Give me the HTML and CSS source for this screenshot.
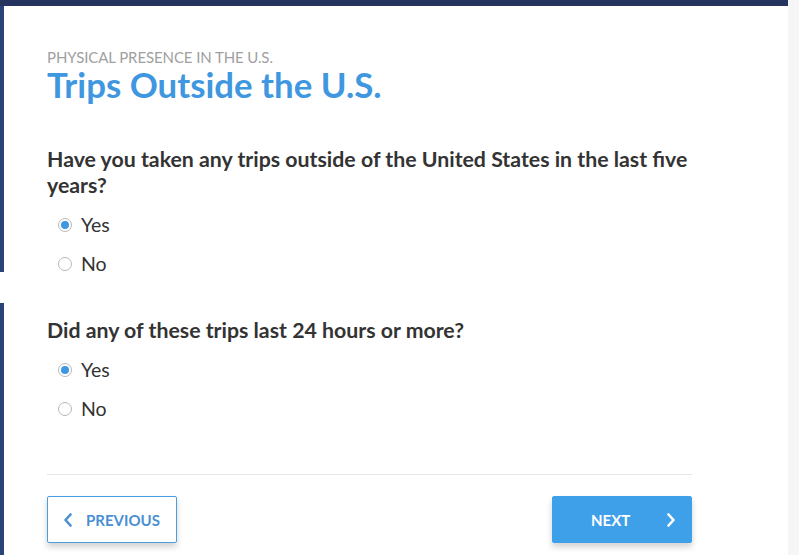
FILE: index.html
```html
<!DOCTYPE html>
<html>
<head>
<meta charset="utf-8">
<link rel="stylesheet" href="styles.css">
</head>
<body>
<div class="app">
  <div class="side">
    <div class="side-top"></div>
    <div class="side-bottom"></div>
  </div>
  <div class="main">
    <div class="topbar"></div>
    <div class="content">
      <div class="eyebrow">PHYSICAL PRESENCE IN THE U.S.</div>
      <h1 class="title">Trips Outside the U.S.</h1>

      <div class="question">
        <h2 class="q-text">Have you taken any trips outside of the United States in the last five years?</h2>
        <label class="option"><span class="radio checked"></span><span class="opt-label">Yes</span></label>
        <label class="option"><span class="radio"></span><span class="opt-label">No</span></label>
      </div>

      <div class="question q2">
        <h2 class="q-text">Did any of these trips last 24 hours or more?</h2>
        <label class="option"><span class="radio checked"></span><span class="opt-label">Yes</span></label>
        <label class="option"><span class="radio"></span><span class="opt-label">No</span></label>
      </div>

      <hr class="divider">

      <div class="nav">
        <button class="btn btn-prev">
          <svg class="chev" width="10" height="14" viewBox="0 0 10 14"><path d="M7.5 1.5 L2.5 7 L7.5 12.5" fill="none" stroke="currentColor" stroke-width="2.6" stroke-linecap="round" stroke-linejoin="round"/></svg>
          <span>PREVIOUS</span>
        </button>
        <button class="btn btn-next">
          <span>NEXT</span>
          <svg class="chev" width="10" height="14" viewBox="0 0 10 14"><path d="M2.5 1.5 L7.5 7 L2.5 12.5" fill="none" stroke="currentColor" stroke-width="2.6" stroke-linecap="round" stroke-linejoin="round"/></svg>
        </button>
      </div>
    </div>
  </div>
  <div class="gutter"></div>
</div>
</body>
</html>
```
FILE: styles.css
```css
html, body {
  margin: 0;
  padding: 0;
  background: #ffffff;
  font-family: Lato, "Open Sans", "Liberation Sans", sans-serif;
  color: #333333;
}

.app {
  display: flex;
  width: 799px;
  height: 555px;
  overflow: hidden;
}

.side {
  width: 4px;
  display: flex;
  flex-direction: column;
  gap: 31px;
}

.side-top {
  height: 272px;
  background: #2b4378;
}

.side-bottom {
  flex: 1;
  background: #2b4378;
}

.main {
  flex: 1;
  display: flex;
  flex-direction: column;
  background: #ffffff;
}

.topbar {
  height: 6px;
  background: #25335f;
  margin-left: -4px;
}

.gutter {
  width: 11px;
  background: #f6f6f6;
}

.content {
  padding: 42px 96px 0 43px;
}

.eyebrow {
  font-size: 15px;
  color: #a0a0a0;
  line-height: 18px;
  letter-spacing: -0.1px;
}

.title {
  margin: 0;
  font-size: 34.8px;
  font-weight: 700;
  color: #3f97e0;
  line-height: 38px;
}

.question {
  margin-top: 42px;
}

.q2 {
  margin-top: 34px;
}

.q-text {
  margin: 0 0 7px 0;
  font-size: 21.3px;
  font-weight: 700;
  line-height: 26px;
  color: #333333;
}

.option {
  display: flex;
  align-items: center;
  height: 39px;
  padding-left: 11px;
}

.radio {
  width: 14px;
  height: 14px;
  box-sizing: border-box;
  border: 1px solid #b8b8b8;
  border-radius: 50%;
  background: #ffffff;
  display: flex;
  align-items: center;
  justify-content: center;
  margin-right: 9px;
}

.radio.checked::after {
  content: "";
  width: 8px;
  height: 8px;
  border-radius: 50%;
  background: #3f97e0;
}

.opt-label {
  font-size: 19.5px;
  color: #333333;
}

.divider {
  border: 0;
  border-top: 1px solid #e6e6e6;
  margin: 46px 0 0 0;
}

.nav {
  display: flex;
  justify-content: space-between;
  margin-top: 21px;
}

.btn {
  height: 47px;
  border-radius: 2px;
  font-family: Lato, "Open Sans", "Liberation Sans", sans-serif;
  font-size: 15px;
  font-weight: 700;
  display: flex;
  align-items: center;
  box-shadow: 0 4px 6px rgba(0, 0, 0, 0.18);
  cursor: pointer;
}

.btn-prev {
  width: 130px;
  background: #ffffff;
  border: 1px solid #4a9de0;
  color: #4a8fd4;
  padding: 0 0 0 15px;
  gap: 13px;
}

.btn-next {
  width: 140px;
  background: #3fa0ea;
  border: 1px solid #3fa0ea;
  color: #ffffff;
  padding: 0 0 0 38px;
  gap: 36px;
}
```
